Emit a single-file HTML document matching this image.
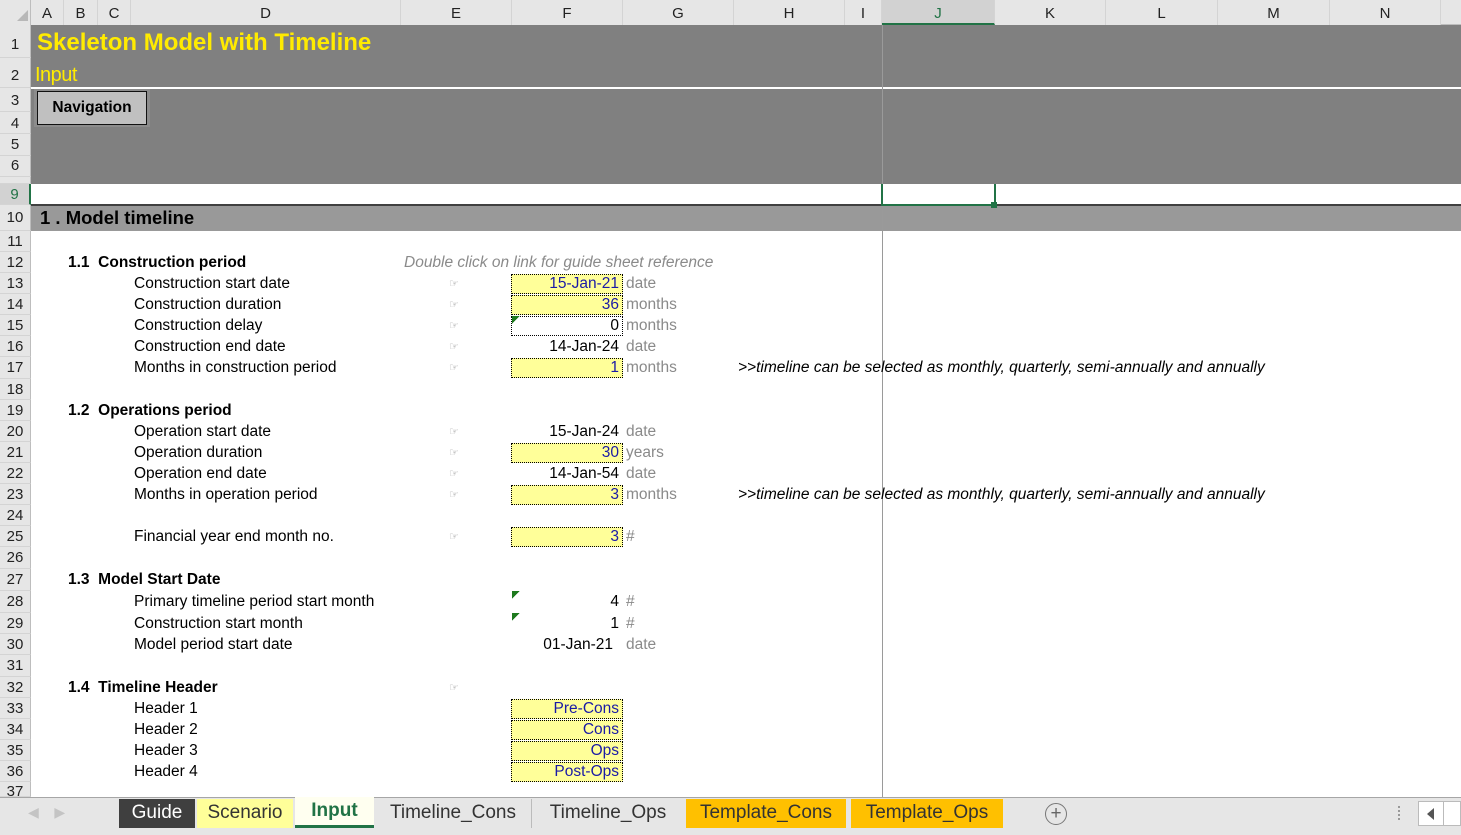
<!DOCTYPE html>
<html><head><meta charset="utf-8"><style>
*{margin:0;padding:0;box-sizing:border-box}
body{width:1461px;height:835px;overflow:hidden;background:#fff;font-family:"Liberation Sans",Arial,sans-serif;position:relative;color:#000}
.a{position:absolute;white-space:nowrap}
.t{position:absolute;white-space:nowrap;font-size:15.5px;line-height:20px;height:20px}
.ch{position:absolute;top:0;height:25px;line-height:28px;text-align:center;font-size:15px;color:#222;border-right:1px solid #d4d4d4;background:#e6e6e6}
.rh{position:absolute;left:0;width:31px;text-align:center;font-size:15px;color:#222;background:#e6e6e6;border-bottom:1px solid #d4d4d4;border-right:1px solid #bdbdbd}
.y{position:absolute;left:511px;width:112px;height:20px;background:#ffff99;border:1px dotted #000;text-align:right;padding-right:3px;color:#1a1aa6;font-size:15.5px;line-height:18px}
.v{position:absolute;width:108px;left:511px;text-align:right;font-size:15.5px;line-height:20px}
.u{position:absolute;left:626px;color:#8a8a8a;font-size:15.5px;line-height:20px}
.h{position:absolute;left:449px;color:#999;font-size:11px;line-height:20px}
.tab{position:absolute;top:799px;height:29px;line-height:28px;font-size:19px;text-align:center;color:#333}
.gt{position:absolute;width:8px;height:8px;background:linear-gradient(135deg,#1e7a1e 50%,transparent 50%)}
</style></head><body>
<!-- column headers -->
<div class="a" style="left:0;top:0;width:1461px;height:25px;background:#e6e6e6;border-bottom:1px solid #bdbdbd"></div>
<div class="a" style="left:0;top:0;width:31px;height:25px;background:#e6e6e6;border-right:1px solid #bdbdbd"></div>
<div class="a" style="left:17px;top:10px;width:0;height:0;border-left:11px solid transparent;border-bottom:11px solid #b8b8b8"></div>
<div class="ch" style="left:31px;width:33px">A</div>
<div class="ch" style="left:64px;width:34px">B</div>
<div class="ch" style="left:98px;width:33px">C</div>
<div class="ch" style="left:131px;width:270px">D</div>
<div class="ch" style="left:401px;width:111px">E</div>
<div class="ch" style="left:512px;width:111px">F</div>
<div class="ch" style="left:623px;width:111px">G</div>
<div class="ch" style="left:734px;width:111px">H</div>
<div class="ch" style="left:845px;width:37px">I</div>
<div class="ch" style="left:882px;width:113px;background:#d2d2d2;border-bottom:2px solid #217346;color:#217346">J</div>
<div class="ch" style="left:995px;width:111px">K</div>
<div class="ch" style="left:1106px;width:112px">L</div>
<div class="ch" style="left:1218px;width:112px">M</div>
<div class="ch" style="left:1330px;width:111px">N</div>

<!-- bands -->
<div class="a" style="left:31px;top:25px;width:1430px;height:62px;background:#808080"></div>
<div class="a" style="left:31px;top:89px;width:1430px;height:95px;background:#808080"></div>
<div class="a" style="left:31px;top:204px;width:1430px;height:2px;background:#404040"></div>
<div class="a" style="left:31px;top:206px;width:1430px;height:25px;background:#999"></div>
<div class="a" style="left:882px;top:25px;width:1px;height:772px;background:#9a9a9a"></div>
<div class="a" style="left:881px;top:184px;width:115px;height:22px;border:2px solid #217346;border-top:none"></div>
<div class="a" style="left:991px;top:202px;width:6px;height:6px;background:#217346"></div>

<div class="a" style="left:37px;top:29px;font-size:24px;font-weight:bold;color:#ffeb00">Skeleton Model with Timeline</div>
<div class="a" style="left:35px;top:64px;font-size:20px;color:#ffeb00;letter-spacing:-0.5px">Input</div>
<div class="a" style="left:34px;top:89px;width:116px;height:38px;background:#8c8c8c"></div>
<div class="a" style="left:37px;top:91px;width:110px;height:34px;background:#c0c0c0;border:1px solid #111;font-size:15.5px;font-weight:bold;text-align:center;line-height:32px">Navigation</div>
<div class="a" style="left:40px;top:207px;font-size:18.5px;font-weight:bold;line-height:22px">1 . Model timeline</div>

<!-- row headers -->
<div class="rh" style="top:25px;height:33px;line-height:40px">1</div>
<div class="rh" style="top:58px;height:30px;line-height:36px">2</div>
<div class="rh" style="top:88px;height:24px;line-height:26px">3</div>
<div class="rh" style="top:112px;height:22px;line-height:24px">4</div>
<div class="rh" style="top:134px;height:22px;line-height:22px">5</div>
<div class="rh" style="top:156px;height:21px;line-height:20px">6</div>
<div class="rh" style="top:177px;height:7px;line-height:6px;font-size:6px"></div>
<div class="rh" style="top:184px;height:21px;line-height:22px;background:#d2d2d2;color:#217346;border-right:2px solid #217346">9</div>
<div class="rh" style="top:205px;height:26px;line-height:26px">10</div>
<div class="rh" style="top:231px;height:21px;line-height:21px">11</div>
<div class="rh" style="top:252px;height:21px;line-height:21px">12</div>
<div class="rh" style="top:273px;height:21px;line-height:21px">13</div>
<div class="rh" style="top:294px;height:21px;line-height:21px">14</div>
<div class="rh" style="top:315px;height:21px;line-height:21px">15</div>
<div class="rh" style="top:336px;height:21px;line-height:21px">16</div>
<div class="rh" style="top:357px;height:22px;line-height:22px">17</div>
<div class="rh" style="top:379px;height:21px;line-height:21px">18</div>
<div class="rh" style="top:400px;height:21px;line-height:21px">19</div>
<div class="rh" style="top:421px;height:21px;line-height:21px">20</div>
<div class="rh" style="top:442px;height:21px;line-height:21px">21</div>
<div class="rh" style="top:463px;height:21px;line-height:21px">22</div>
<div class="rh" style="top:484px;height:21px;line-height:21px">23</div>
<div class="rh" style="top:505px;height:21px;line-height:21px">24</div>
<div class="rh" style="top:526px;height:21px;line-height:21px">25</div>
<div class="rh" style="top:547px;height:22px;line-height:22px">26</div>
<div class="rh" style="top:569px;height:22px;line-height:22px">27</div>
<div class="rh" style="top:591px;height:22px;line-height:22px">28</div>
<div class="rh" style="top:613px;height:21px;line-height:21px">29</div>
<div class="rh" style="top:634px;height:21px;line-height:21px">30</div>
<div class="rh" style="top:655px;height:22px;line-height:22px">31</div>
<div class="rh" style="top:677px;height:21px;line-height:21px">32</div>
<div class="rh" style="top:698px;height:21px;line-height:21px">33</div>
<div class="rh" style="top:719px;height:21px;line-height:21px">34</div>
<div class="rh" style="top:740px;height:21px;line-height:21px">35</div>
<div class="rh" style="top:761px;height:21px;line-height:21px">36</div>
<div class="rh" style="top:782px;height:15px;line-height:20px">37</div>

<!-- content -->
<div class="t" style="left:68px;top:253px;font-weight:bold">1.1&nbsp; Construction period</div>
<div class="t" style="left:404px;top:253px;font-style:italic;color:#8a8a8a">Double click on link for guide sheet reference</div>
<div class="t" style="left:134px;top:274px">Construction start date</div>
<div class="t" style="left:134px;top:295px">Construction duration</div>
<div class="t" style="left:134px;top:316px">Construction delay</div>
<div class="t" style="left:134px;top:337px">Construction end date</div>
<div class="t" style="left:134px;top:358px">Months in construction period</div>
<div class="h" style="top:274px">☞</div><div class="h" style="top:295px">☞</div><div class="h" style="top:316px">☞</div><div class="h" style="top:337px">☞</div><div class="h" style="top:358px">☞</div>
<div class="y" style="top:274px">15-Jan-21</div>
<div class="y" style="top:295px">36</div>
<div class="y" style="top:316px;background:#fff;color:#000">0</div><div class="gt" style="left:512px;top:316px"></div>
<div class="v" style="top:337px">14-Jan-24</div>
<div class="y" style="top:358px">1</div>
<div class="u" style="top:274px">date</div><div class="u" style="top:295px">months</div><div class="u" style="top:316px">months</div><div class="u" style="top:337px">date</div><div class="u" style="top:358px">months</div>
<div class="t" style="left:738px;top:358px;font-style:italic">&gt;&gt;timeline can be selected as monthly, quarterly, semi-annually and annually</div>

<div class="t" style="left:68px;top:401px;font-weight:bold">1.2&nbsp; Operations period</div>
<div class="t" style="left:134px;top:422px">Operation start date</div>
<div class="t" style="left:134px;top:443px">Operation duration</div>
<div class="t" style="left:134px;top:464px">Operation end date</div>
<div class="t" style="left:134px;top:485px">Months in operation period</div>
<div class="t" style="left:134px;top:527px">Financial year end month no.</div>
<div class="h" style="top:422px">☞</div><div class="h" style="top:443px">☞</div><div class="h" style="top:464px">☞</div><div class="h" style="top:485px">☞</div><div class="h" style="top:527px">☞</div>
<div class="v" style="top:422px">15-Jan-24</div>
<div class="y" style="top:443px">30</div>
<div class="v" style="top:464px">14-Jan-54</div>
<div class="y" style="top:485px">3</div>
<div class="y" style="top:527px">3</div>
<div class="u" style="top:422px">date</div><div class="u" style="top:443px">years</div><div class="u" style="top:464px">date</div><div class="u" style="top:485px">months</div><div class="u" style="top:527px">#</div>
<div class="t" style="left:738px;top:485px;font-style:italic">&gt;&gt;timeline can be selected as monthly, quarterly, semi-annually and annually</div>

<div class="t" style="left:68px;top:570px;font-weight:bold">1.3&nbsp; Model Start Date</div>
<div class="t" style="left:134px;top:592px">Primary timeline period start month</div>
<div class="t" style="left:134px;top:614px">Construction start month</div>
<div class="t" style="left:134px;top:635px">Model period start date</div>
<div class="gt" style="left:512px;top:591px"></div><div class="gt" style="left:512px;top:613px"></div>
<div class="v" style="top:592px">4</div>
<div class="v" style="top:614px">1</div>
<div class="v" style="top:635px;width:102px">01-Jan-21</div>
<div class="u" style="top:592px">#</div><div class="u" style="top:614px">#</div><div class="u" style="top:635px">date</div>

<div class="t" style="left:68px;top:678px;font-weight:bold">1.4&nbsp; Timeline Header</div>
<div class="h" style="top:678px">☞</div>
<div class="t" style="left:134px;top:699px">Header 1</div>
<div class="t" style="left:134px;top:720px">Header 2</div>
<div class="t" style="left:134px;top:741px">Header 3</div>
<div class="t" style="left:134px;top:762px">Header 4</div>
<div class="y" style="top:699px">Pre-Cons</div>
<div class="y" style="top:720px">Cons</div>
<div class="y" style="top:741px">Ops</div>
<div class="y" style="top:762px">Post-Ops</div>

<!-- tab bar -->
<div class="a" style="left:0;top:797px;width:1461px;height:38px;background:#e6e6e6;border-top:1px solid #a6a6a6"></div>
<div class="a" style="left:28px;top:804px;color:#c4c4c4;font-size:14px">&#9664;&nbsp;&nbsp;&nbsp;&nbsp;&#9654;</div>
<div class="tab" style="left:119px;width:76px;background:#3f3f3f;color:#fff">Guide</div>
<div class="tab" style="left:197px;width:96px;background:#ffff99">Scenario</div>
<div class="tab" style="left:295px;width:79px;top:797px;height:31px;background:#fffff0;color:#217346;font-weight:bold;border-bottom:3px solid #217346">Input</div>
<div class="tab" style="left:375px;width:157px;border-right:1px solid #bbb">Timeline_Cons</div>
<div class="tab" style="left:534px;width:148px">Timeline_Ops</div>
<div class="tab" style="left:686px;width:160px;background:#ffc000">Template_Cons</div>
<div class="tab" style="left:851px;width:152px;background:#ffc000">Template_Ops</div>
<div class="a" style="left:1045px;top:803px;width:22px;height:22px;border:1px solid #777;border-radius:50%;text-align:center;line-height:19px;font-size:19px;color:#666">+</div>
<div class="a" style="left:1398px;top:806px;width:2px;height:14px;border-left:2px dotted #999"></div>
<div class="a" style="left:1418px;top:801px;width:43px;height:25px;background:#fff;border:1px solid #bbb"></div>
<div class="a" style="left:1443px;top:801px;width:1px;height:25px;background:#bbb"></div>
<div class="a" style="left:1427px;top:808px;width:0;height:0;border-top:6px solid transparent;border-bottom:6px solid transparent;border-right:7px solid #555"></div>
</body></html>
